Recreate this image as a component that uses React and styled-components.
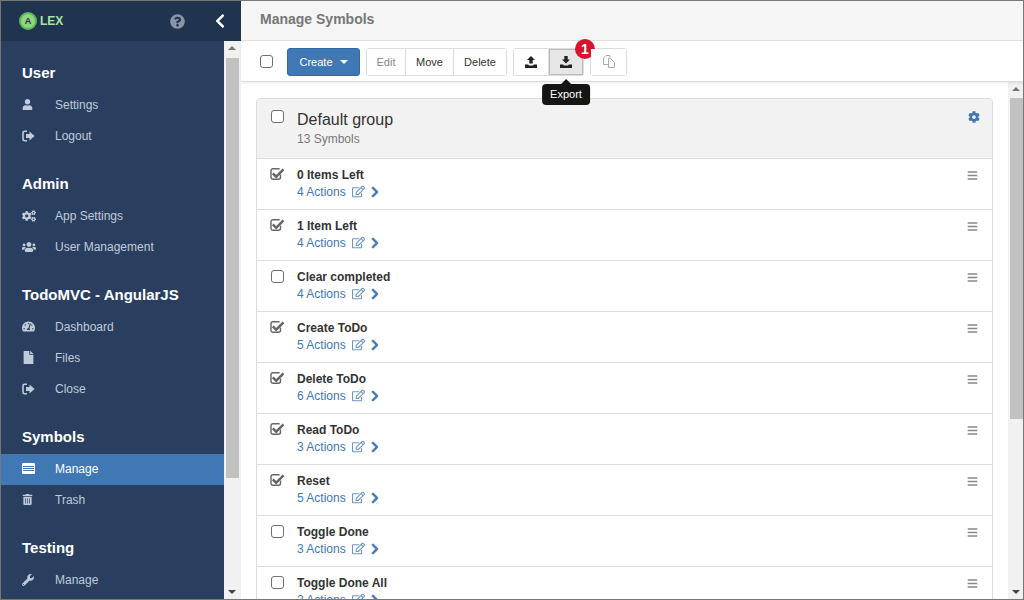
import React from "react";
import styled, { createGlobalStyle } from "styled-components";
import {
  FaUser,
  FaCogs,
  FaUsers,
  FaTachometerAlt,
  FaFile,
  FaTrashAlt,
  FaWrench,
  FaCog,
  FaBars,
  FaChevronLeft,
  FaChevronRight,
  FaQuestionCircle,
  FaRegEdit,
} from "react-icons/fa";

const SignOutIcon = () => (
  <svg width="13" height="12" viewBox="0 0 13 12">
    <path d="M5 1.2H2.6A1.6 1.6 0 0 0 1 2.8v6.4a1.6 1.6 0 0 0 1.6 1.6H5" fill="none" stroke="currentColor" strokeWidth="1.6" />
    <path d="M7.5 1.6 12.6 6l-5.1 4.4V8H4V4h3.5z" fill="currentColor" />
  </svg>
);

const ListIcon = () => (
  <svg width="13" height="11" viewBox="0 0 13 11">
    <path d="M0 1a1 1 0 0 1 1-1h11a1 1 0 0 1 1 1v9a1 1 0 0 1-1 1H1a1 1 0 0 1-1-1z" fill="currentColor" />
    <path d="M1 3.5h11M1 5.5h11M1 7.5h11" stroke="#3f78b5" strokeWidth="1" />
  </svg>
);

const TrayIcon = ({ down }) => (
  <svg width="12" height="12" viewBox="0 0 12 12">
    {down ? (
      <path d="M4.3 0h3.4v3.6H10L6 7.6 2 3.6h2.3z" fill="#222" />
    ) : (
      <path d="M6 0l4 4H7.7v3.6H4.3V4H2z" fill="#222" />
    )}
    <path d="M0 8.6h3.2L4 9.6h4l.8-1H12V12H0z" fill="#222" />
  </svg>
);

const CopyIcon = () => (
  <svg width="12" height="13" viewBox="0 0 12 13" fill="none" stroke="#aaa" strokeWidth="1">
    <path d="M7 3V.5H3L.5 3v6.5H5" />
    <path d="M7.5 3.5H5.5V12.5H11.5V7.5L7.5 3.5z" />
  </svg>
);

const CheckedIcon = () => (
  <svg width="15" height="14" viewBox="0 0 15 14">
    <path d="M10.5 7.6v2.7a2 2 0 0 1-2 2H3a2 2 0 0 1-2-2V3.7a2 2 0 0 1 2-2h6.6" fill="none" stroke="#666" strokeWidth="1.4" />
    <path d="M3.6 5.6 6.2 8 12.6 1.4 14.4 3.2 6.2 11.4 1.9 7.3z" fill="#666" />
  </svg>
);

const sections = [
  {
    title: "User",
    items: [
      { label: "Settings", icon: <FaUser size={11} /> },
      { label: "Logout", icon: <SignOutIcon /> },
    ],
  },
  {
    title: "Admin",
    items: [
      { label: "App Settings", icon: <FaCogs size={14} /> },
      { label: "User Management", icon: <FaUsers size={14} /> },
    ],
  },
  {
    title: "TodoMVC - AngularJS",
    items: [
      { label: "Dashboard", icon: <FaTachometerAlt size={13} /> },
      { label: "Files", icon: <FaFile size={13} /> },
      { label: "Close", icon: <SignOutIcon /> },
    ],
  },
  {
    title: "Symbols",
    items: [
      { label: "Manage", icon: <ListIcon />, active: true },
      { label: "Trash", icon: <FaTrashAlt size={11} /> },
    ],
  },
  {
    title: "Testing",
    items: [{ label: "Manage", icon: <FaWrench size={12} /> }],
  },
];

const symbols = [
  { name: "0 Items Left", actions: 4, checked: true },
  { name: "1 Item Left", actions: 4, checked: true },
  { name: "Clear completed", actions: 4 },
  { name: "Create ToDo", actions: 5, checked: true },
  { name: "Delete ToDo", actions: 6, checked: true },
  { name: "Read ToDo", actions: 3, checked: true },
  { name: "Reset", actions: 5, checked: true },
  { name: "Toggle Done", actions: 3 },
  { name: "Toggle Done All", actions: 2 },
];

const App = () => {
  return (
    <Page>
      <GlobalStyle />
      <Sidebar>
        <Brand>
          <Logo>
            <LogoMark>A</LogoMark>
            LEX
          </Logo>
          <HelpIcon>
            <FaQuestionCircle size={15} />
          </HelpIcon>
          <CollapseIcon>
            <FaChevronLeft size={16} />
          </CollapseIcon>
        </Brand>
        <SidebarBody>
          <Nav>
            {sections.map((s) => (
              <NavSection key={s.title}>
                <NavTitle>{s.title}</NavTitle>
                {s.items.map((i) => (
                  <NavItem key={i.label} $active={i.active}>
                    <NavIcon>{i.icon}</NavIcon>
                    {i.label}
                  </NavItem>
                ))}
              </NavSection>
            ))}
          </Nav>
          <Scrollbar $width={17} $inset={2} $thumbTop={17} $thumbHeight={420}>
            <ArrowUp />
            <ArrowDown />
          </Scrollbar>
        </SidebarBody>
      </Sidebar>
      <Main>
        <PageHeader>Manage Symbols</PageHeader>
        <Toolbar>
          <BlankCheck />
          <PrimaryButton>
            Create
            <Caret />
          </PrimaryButton>
          <ButtonGroup>
            <Button $width={38} $muted>
              Edit
            </Button>
            <Button $width={48}>Move</Button>
            <Button $width={53}>Delete</Button>
          </ButtonGroup>
          <ButtonGroup>
            <Button $width={34}>
              <TrayIcon />
            </Button>
            <Button $width={35} $pressed>
              <TrayIcon down />
              <Badge>1</Badge>
              <Tooltip>Export</Tooltip>
            </Button>
          </ButtonGroup>
          <ButtonGroup>
            <Button $width={35} $muted>
              <CopyIcon />
            </Button>
          </ButtonGroup>
        </Toolbar>
        <ContentArea>
          <Content>
            <Card>
              <CardHeader>
                <BlankCheck />
                <GroupInfo>
                  <GroupName>Default group</GroupName>
                  <GroupCount>13 Symbols</GroupCount>
                </GroupInfo>
                <GroupCog>
                  <FaCog size={12} />
                </GroupCog>
              </CardHeader>
              {symbols.map((s) => (
                <SymbolRow key={s.name}>
                  <RowCheck>{s.checked ? <CheckedIcon /> : <BlankCheck />}</RowCheck>
                  <SymbolInfo>
                    <SymbolName>{s.name}</SymbolName>
                    <SymbolActions>
                      {s.actions} Actions
                      <EditGlyph>
                        <FaRegEdit size={13} />
                      </EditGlyph>
                      <FaChevronRight size={12} stroke="currentColor" strokeWidth={30} />
                    </SymbolActions>
                  </SymbolInfo>
                  <RowMenu>
                    <FaBars size={11} />
                  </RowMenu>
                </SymbolRow>
              ))}
            </Card>
          </Content>
          <Scrollbar $width={15} $inset={0} $thumbTop={16} $thumbHeight={321}>
            <ArrowUp />
            <ArrowDown />
          </Scrollbar>
        </ContentArea>
      </Main>
    </Page>
  );
};

const GlobalStyle = createGlobalStyle`
  html, body {
    margin: 0;
    height: 100%;
    overflow: hidden;
  }
  * {
    box-sizing: border-box;
  }
  body {
    font-family: "Liberation Sans", Arial, sans-serif;
    font-size: 12px;
    color: #333;
  }
`;

const Page = styled.div`
  display: flex;
  width: 1024px;
  height: 600px;
  border: 1px solid #777;
  background: #fff;
  overflow: hidden;
`;

const Sidebar = styled.aside`
  display: flex;
  flex-direction: column;
  flex: 0 0 240px;
  background: #2a3f5f;
`;

const Brand = styled.div`
  display: flex;
  align-items: center;
  flex: 0 0 40px;
  padding: 0 0 0 18px;
  background: #20334f;
`;

const Logo = styled.div`
  display: flex;
  align-items: center;
  gap: 3px;
  color: #a8e2a4;
  font-weight: bold;
  font-size: 12px;
  flex: 1;
`;

const LogoMark = styled.span`
  display: flex;
  align-items: center;
  justify-content: center;
  width: 18px;
  height: 18px;
  border-radius: 50%;
  background: #8fd67f;
  border: 2px solid #5cb85c;
  color: #20334f;
  font-size: 9px;
  font-weight: bold;
`;

const HelpIcon = styled.span`
  display: flex;
  color: #8a96a8;
  margin-right: 27px;
`;

const CollapseIcon = styled.span`
  display: flex;
  color: #fff;
  margin-right: 13px;
`;

const SidebarBody = styled.div`
  display: flex;
  flex: 1;
  min-height: 0;
`;

const Nav = styled.nav`
  flex: 1;
  padding-top: 16px;
  overflow: hidden;
`;

const NavSection = styled.section`
  margin-bottom: 16px;
`;

const NavTitle = styled.h3`
  margin: 0;
  height: 33px;
  line-height: 31px;
  padding-left: 21px;
  font-size: 15px;
  font-weight: bold;
  color: #fff;
`;

const NavItem = styled.a`
  display: flex;
  align-items: center;
  height: 31px;
  padding: 0 0 2px 21px;
  color: ${(p) => (p.$active ? "#fff" : "#bfcbdb")};
  background: ${(p) => (p.$active ? "#3f78b5" : "transparent")};
`;

const NavIcon = styled.span`
  display: flex;
  align-items: center;
  width: 33px;
`;

const Scrollbar = styled.div`
  position: relative;
  flex: 0 0 ${(p) => p.$width}px;
  background: #f1f1f1;
  &::before {
    content: "";
    position: absolute;
    left: 2px;
    right: ${(p) => p.$inset}px;
    top: ${(p) => p.$thumbTop}px;
    height: ${(p) => p.$thumbHeight}px;
    background: #c1c1c1;
  }
`;

const ArrowUp = styled.span`
  position: absolute;
  top: 5px;
  left: 4px;
  border: 4px solid transparent;
  border-top: 0;
  border-bottom: 4px solid #777;
`;

const ArrowDown = styled.span`
  position: absolute;
  bottom: 5px;
  left: 4px;
  border: 4px solid transparent;
  border-bottom: 0;
  border-top: 4px solid #444;
`;

const Main = styled.main`
  display: flex;
  flex-direction: column;
  flex: 1;
  min-width: 0;
`;

const PageHeader = styled.header`
  flex: 0 0 40px;
  padding-left: 19px;
  line-height: 37px;
  font-size: 14px;
  font-weight: bold;
  color: #777;
  background: #f5f5f5;
  border-bottom: 1px solid #e0e0e0;
`;

const Toolbar = styled.div`
  display: flex;
  align-items: center;
  gap: 6px;
  flex: 0 0 41px;
  padding: 1px 0 0 19px;
  border-bottom: 1px solid #ddd;
  box-shadow: 0 1px 2px rgba(0, 0, 0, 0.08);
  position: relative;
  z-index: 1;
`;

const BlankCheck = styled.span`
  display: block;
  flex: 0 0 13px;
  width: 13px;
  height: 13px;
  border: 1.5px solid #707070;
  border-radius: 3px;
  background: #fff;
`;

const PrimaryButton = styled.button`
  display: flex;
  align-items: center;
  justify-content: center;
  gap: 7px;
  width: 73px;
  height: 28px;
  margin-left: 8px;
  padding: 0;
  border: 1px solid #2e6da4;
  border-radius: 3px;
  background: #3f78b5;
  color: #fff;
  font: 11px "Liberation Sans", Arial, sans-serif;
`;

const Caret = styled.span`
  border: 4px solid transparent;
  border-bottom: 0;
  border-top: 4px solid #fff;
`;

const ButtonGroup = styled.div`
  display: flex;
  height: 28px;
  border: 1px solid #ddd;
  border-radius: 3px;
`;

const Button = styled.button`
  position: relative;
  display: flex;
  align-items: center;
  justify-content: center;
  width: ${(p) => p.$width}px;
  padding: 0;
  border: 0;
  border-left: 1px solid #ddd;
  background: ${(p) => (p.$pressed ? "#e6e6e6" : "#fff")};
  box-shadow: ${(p) => (p.$pressed ? "inset 0 0 0 1px #bbb" : "none")};
  color: ${(p) => (p.$muted ? "#888" : "#333")};
  font: 11px "Liberation Sans", Arial, sans-serif;
  &:first-child {
    border-left: 0;
  }
`;

const Badge = styled.span`
  position: absolute;
  top: -10px;
  right: -12px;
  width: 20px;
  height: 20px;
  border-radius: 50%;
  background: #d9122d;
  color: #fff;
  font-size: 14px;
  font-weight: bold;
  line-height: 20px;
  text-align: center;
`;

const Tooltip = styled.span`
  position: absolute;
  top: 35px;
  left: 50%;
  transform: translateX(-50%);
  padding: 0 8px;
  height: 21px;
  line-height: 21px;
  border-radius: 4px;
  background: #151515;
  color: #fff;
  font-size: 11px;
  white-space: nowrap;
  &::before {
    content: "";
    position: absolute;
    top: -5px;
    left: 50%;
    margin-left: -5px;
    border: 5px solid transparent;
    border-top: 0;
    border-bottom: 5px solid #151515;
  }
`;

const ContentArea = styled.div`
  display: flex;
  flex: 1;
  min-height: 0;
`;

const Content = styled.div`
  flex: 1;
  padding: 16px 15px 0;
  overflow: hidden;
`;

const Card = styled.div`
  border: 1px solid #ddd;
  border-radius: 4px;
`;

const CardHeader = styled.div`
  display: flex;
  height: 60px;
  padding: 11px 7px 0 14px;
  background: #f2f2f2;
  border-bottom: 1px solid #ddd;
  border-radius: 4px 4px 0 0;
`;

const GroupInfo = styled.div`
  flex: 1;
  margin-left: 13px;
`;

const GroupName = styled.div`
  padding-top: 1px;
  font-size: 16px;
  line-height: 18px;
  color: #333;
`;

const GroupCount = styled.div`
  margin-top: 3px;
  font-size: 12px;
  color: #777;
`;

const GroupCog = styled.span`
  display: flex;
  height: 14px;
  margin: 1px 5px 0 0;
  color: #3f78b5;
`;

const SymbolRow = styled.div`
  display: flex;
  height: 51px;
  padding: 8px 14px 0 13px;
  border-bottom: 1px solid #ddd;
`;

const RowCheck = styled.div`
  flex: 0 0 15px;
  > span {
    margin: 1px 0 0 1px;
  }
`;

const SymbolInfo = styled.div`
  flex: 1;
  margin-left: 12px;
`;

const SymbolName = styled.div`
  padding-top: 1px;
  font-weight: bold;
  line-height: 15px;
  color: #333;
`;

const SymbolActions = styled.div`
  display: flex;
  align-items: center;
  gap: 6px;
  height: 17px;
  color: #3f78b5;
`;

const EditGlyph = styled.span`
  display: flex;
  margin-right: -2px;
  color: #6f96c4;
`;

const RowMenu = styled.span`
  display: flex;
  height: 14px;
  margin-top: 3px;
  color: #888;
`;

export default App;
